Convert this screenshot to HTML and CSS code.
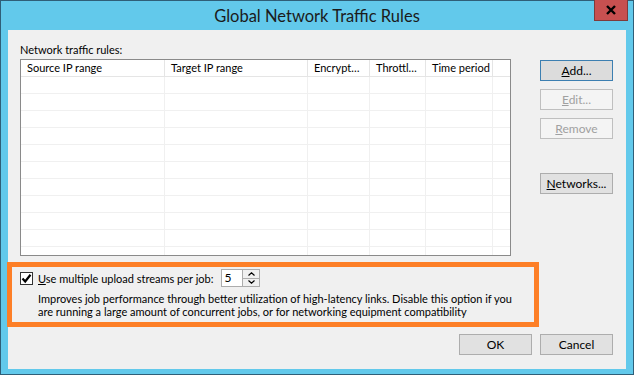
FILE: index.html
```html
<!DOCTYPE html>
<html lang="en">
<head>
    <meta charset="UTF-8">
    <title>Global Network Traffic Rules</title>
    <link rel="stylesheet" href="styles.css">
</head>
<body>
    <div class="window">
        <div class="titlebar">
            <span class="title">Global Network Traffic Rules</span>
            <div class="close">
                <svg width="12" height="10" viewBox="0 0 12 10">
                    <path d="M2 1 L10 9 M10 1 L2 9" stroke="#000" stroke-width="2.4" fill="none"/>
                </svg>
            </div>
        </div>

        <div class="client">
            <div class="main">
                <div class="rules">
                    <div class="label">Network traffic rules:</div>
                    <div class="listview">
                        <table class="grid">
                            <thead>
                                <tr>
                                    <th class="c1">Source IP range</th>
                                    <th class="c2">Target IP range</th>
                                    <th class="c3">Encrypt…</th>
                                    <th class="c4">Throttl…</th>
                                    <th class="c5">Time period</th>
                                    <th class="c6"></th>
                                </tr>
                            </thead>
                            <tbody>
                                <tr><td></td><td></td><td></td><td></td><td></td><td></td></tr>
                                <tr><td></td><td></td><td></td><td></td><td></td><td></td></tr>
                                <tr><td></td><td></td><td></td><td></td><td></td><td></td></tr>
                                <tr><td></td><td></td><td></td><td></td><td></td><td></td></tr>
                                <tr><td></td><td></td><td></td><td></td><td></td><td></td></tr>
                                <tr><td></td><td></td><td></td><td></td><td></td><td></td></tr>
                                <tr><td></td><td></td><td></td><td></td><td></td><td></td></tr>
                                <tr><td></td><td></td><td></td><td></td><td></td><td></td></tr>
                                <tr><td></td><td></td><td></td><td></td><td></td><td></td></tr>
                                <tr><td></td><td></td><td></td><td></td><td></td><td></td></tr>
                                <tr><td></td><td></td><td></td><td></td><td></td><td></td></tr>
                            </tbody>
                        </table>
                    </div>
                </div>

                <div class="side">
                    <div class="btn btn-default"><u>A</u>dd...</div>
                    <div class="btn btn-disabled"><u>E</u>dit...</div>
                    <div class="btn btn-disabled"><u>R</u>emove</div>
                    <div class="btn btn-networks"><u>N</u>etworks...</div>
                </div>
            </div>

            <div class="option">
                <div class="option-row">
                    <span class="checkbox">
                        <svg width="11" height="11" viewBox="0 0 11 11">
                            <path d="M1.5 5.5 L4.2 8.5 L9.5 1.8" stroke="#000" stroke-width="2.2" fill="none"/>
                        </svg>
                    </span>
                    <span class="option-label"><u>U</u>se multiple upload streams per job:</span>
                    <span class="spinner">
                        <span class="spin-value">5</span>
                        <span class="spin-buttons">
                            <span class="spin-btn">
                                <svg width="7" height="4" viewBox="0 0 7 4"><path d="M0.5 3.5 L3.5 0.8 L6.5 3.5" stroke="#000" stroke-width="1.2" fill="none"/></svg>
                            </span>
                            <span class="spin-btn">
                                <svg width="7" height="4" viewBox="0 0 7 4"><path d="M0.5 0.5 L3.5 3.2 L6.5 0.5" stroke="#000" stroke-width="1.2" fill="none"/></svg>
                            </span>
                        </span>
                    </span>
                </div>
                <div class="option-desc">
                    Improves job performance through better utilization of high-latency links. Disable this option if you<br>
                    are running a large amount of concurrent jobs, or for networking equipment compatibility
                </div>
            </div>

            <div class="footer">
                <div class="btn">OK</div>
                <div class="btn">Cancel</div>
            </div>
        </div>
    </div>
</body>
</html>
```

FILE: styles.css
```css
body {
    margin: 0;
    padding: 0;
    font-family: Lato, "Noto Sans", sans-serif;
    font-size: 11px;
    color: #000;
}

.window {
    position: relative;
    width: 634px;
    height: 375px;
    box-sizing: border-box;
    border: 1px solid #2f5f78;
    background-color: #62c9eb;
    padding: 0 7px 5px 7px;
}

.titlebar {
    height: 29px;
    display: flex;
    align-items: center;
    justify-content: center;
}

.title {
    font-size: 16.5px;
    color: #1b1b1b;
    margin-top: 1px;
}

.close {
    position: absolute;
    top: -1px;
    right: 5px;
    width: 34px;
    height: 21px;
    box-sizing: border-box;
    background-color: #c75050;
    border: 1px solid #7f3a3a;
    border-top: none;
    display: flex;
    align-items: center;
    justify-content: center;
}

.client {
    height: 339px;
    box-sizing: border-box;
    background-color: #f0f0f0;
    padding: 12px 13px 0 12px;
}

.main {
    display: flex;
    gap: 29px;
}

.label {
    height: 15px;
    line-height: 15px;
    margin-bottom: 2px;
}

.listview {
    width: 491px;
    height: 197px;
    box-sizing: border-box;
    border: 1px solid #8a8a8a;
    background: #fff;
    overflow: hidden;
}

.grid {
    border-collapse: collapse;
    table-layout: fixed;
    width: 489px;
}

.grid th {
    height: 16px;
    padding: 0 0 0 6px;
    font-weight: normal;
    text-align: left;
    white-space: nowrap;
    overflow: hidden;
    border-right: 1px solid #e5e5e5;
    border-bottom: 1px solid #e5e5e5;
    line-height: 16px;
}

.grid th.c6 {
    border-right: none;
}

.grid td {
    height: 16px;
    padding: 0;
    border-right: 1px solid #f0f0f0;
    border-bottom: 1px solid #f0f0f0;
}

.grid td:last-child {
    border-right: none;
}

.c1 { width: 137px; }
.c2 { width: 136px; }
.c3 { width: 55px; }
.c4 { width: 49px; }
.c5 { width: 60px; }

.side {
    display: flex;
    flex-direction: column;
    gap: 8px;
    padding-top: 18px;
}

.btn {
    width: 73px;
    height: 21px;
    box-sizing: border-box;
    border: 1px solid #adadad;
    background-color: #e1e1e1;
    text-align: center;
    line-height: 19px;
    font-size: 12px;
}

.btn-default {
    border-color: #3c7fb1;
    background-color: #dcdcdc;
}

.btn-disabled {
    border-color: #bfbfbf;
    background-color: #f4f4f4;
    color: #a0a0a0;
}

.btn-networks {
    margin-top: 26px;
}

.option {
    width: 532px;
    height: 65px;
    box-sizing: border-box;
    margin: 6px 0 0 -13px;
    border: 5px solid #fd7f27;
    padding: 2px 0 0 8px;
}

.option-row {
    display: flex;
    align-items: center;
    height: 18px;
}

.checkbox {
    width: 13px;
    height: 13px;
    box-sizing: border-box;
    border: 1px solid #333;
    background: #fff;
    display: flex;
    align-items: center;
    justify-content: center;
}

.option-label {
    margin-left: 5px;
    font-size: 11px;
}

.spinner {
    display: flex;
    width: 39px;
    height: 18px;
    box-sizing: border-box;
    border: 1px solid #acacac;
    background: #fff;
    margin-left: 8px;
}

.spin-value {
    flex: 1;
    padding-left: 2px;
    line-height: 16px;
    font-size: 12px;
}

.spin-buttons {
    display: flex;
    flex-direction: column;
    width: 17px;
}

.spin-btn {
    flex: 1;
    border-left: 1px solid #acacac;
    border-bottom: 1px solid #acacac;
    background: #f0f0f0;
    display: flex;
    align-items: center;
    justify-content: center;
}

.spin-btn:last-child {
    border-bottom: none;
}

.option-desc {
    margin: 5px 0 0 18px;
    line-height: 13px;
    white-space: nowrap;
}

.footer {
    display: flex;
    justify-content: flex-end;
    gap: 8px;
    margin-top: 7px;
}
```
